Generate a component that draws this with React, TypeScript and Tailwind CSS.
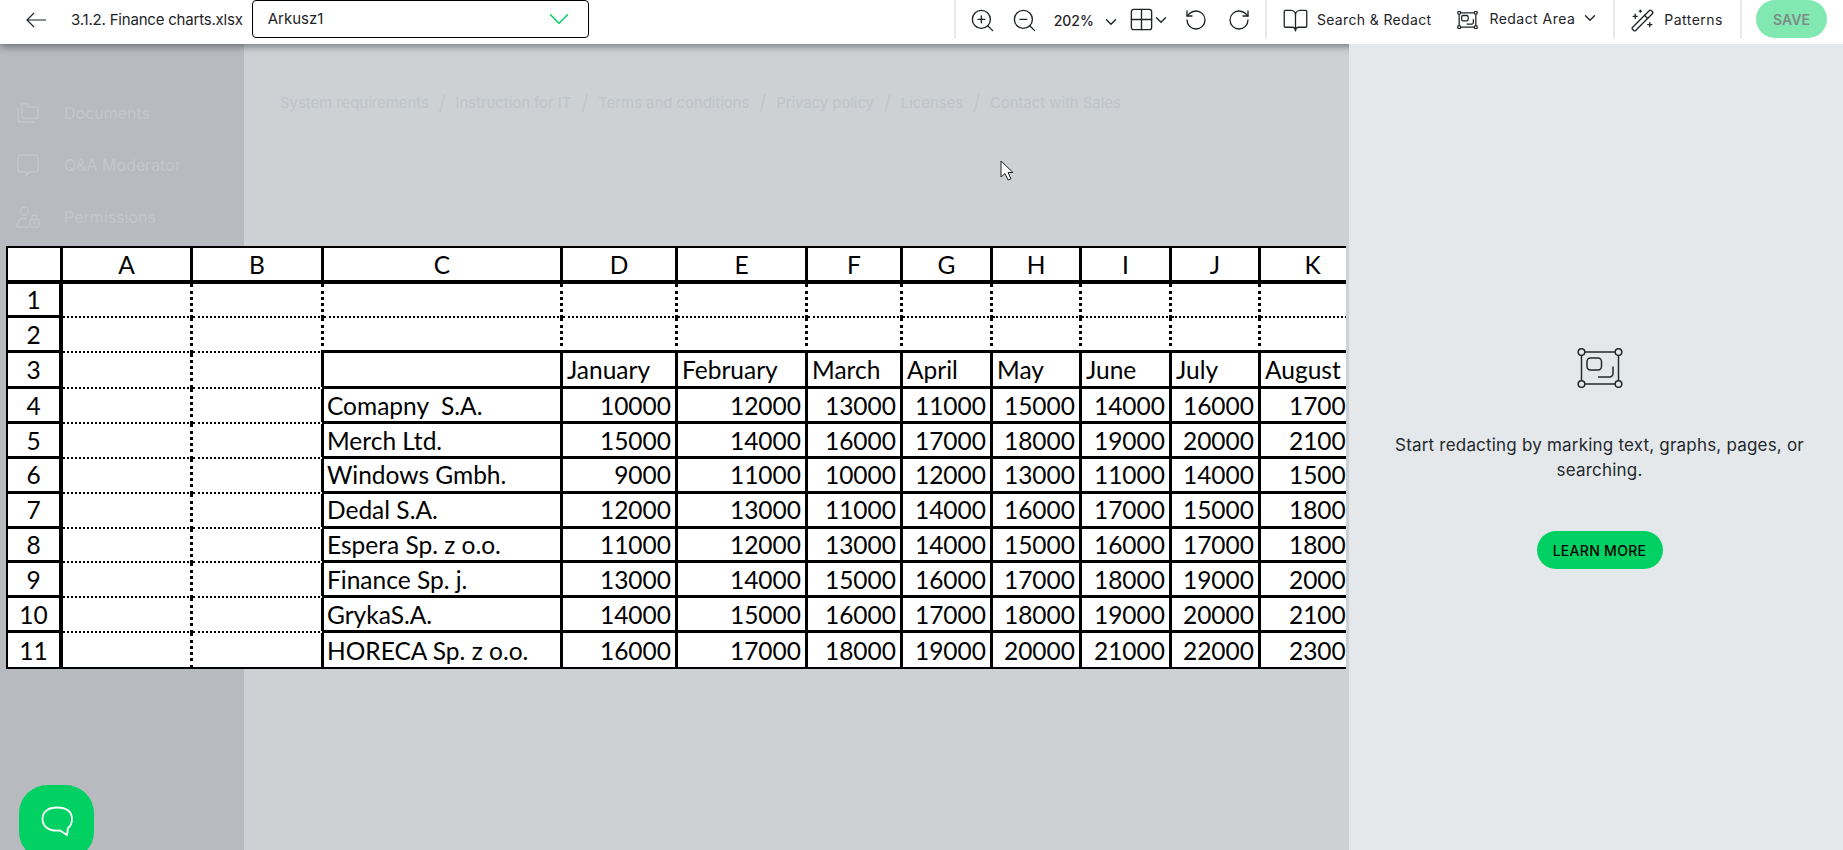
import React from 'react';
import { ZoomIn, ZoomOut, ChevronDown, Grid2x2, RotateCcw, RotateCw, BookOpen, WandSparkles } from 'lucide-react';

const columnHeaders = ['A', 'B', 'C', 'D', 'E', 'F', 'G', 'H', 'I', 'J', 'K'];
const months = ['January', 'February', 'March', 'April', 'May', 'June', 'July', 'August'];

const companies: [string, number[]][] = [
  ['Comapny  S.A.', [10000, 12000, 13000, 11000, 15000, 14000, 16000, 17000]],
  ['Merch Ltd.', [15000, 14000, 16000, 17000, 18000, 19000, 20000, 21000]],
  ['Windows Gmbh.', [9000, 11000, 10000, 12000, 13000, 11000, 14000, 15000]],
  ['Dedal S.A.', [12000, 13000, 11000, 14000, 16000, 17000, 15000, 18000]],
  ['Espera Sp. z o.o.', [11000, 12000, 13000, 14000, 15000, 16000, 17000, 18000]],
  ['Finance Sp. j.', [13000, 14000, 15000, 16000, 17000, 18000, 19000, 20000]],
  ['GrykaS.A.', [14000, 15000, 16000, 17000, 18000, 19000, 20000, 21000]],
  ['HORECA Sp. z o.o.', [16000, 17000, 18000, 19000, 20000, 21000, 22000, 23000]],
];

const breadcrumbs = ['System requirements', 'Instruction for IT', 'Terms and conditions', 'Privacy policy', 'Licenses', 'Contact with Sales'];

const RedactIcon = ({ className, stroke = 1.5 }: { className?: string; stroke?: number }) => (
  <svg className={className} viewBox="0 0 46 40" fill="none" stroke="currentColor" strokeWidth={stroke}>
    <path d="M7.500 4h31M7.500 36h31M4.500 7v26M41.500 7v26" />
    <circle cx="4.500" cy="4" r="3.300" />
    <circle cx="41.500" cy="4" r="3.300" />
    <circle cx="4.500" cy="36" r="3.300" />
    <circle cx="41.500" cy="36" r="3.300" />
    <rect x="10" y="10" width="14.500" height="12" rx="3.500" />
    <path d="M36 18.500v7a3.500 3.500 0 0 1-3.500 3.500H21" />
  </svg>
);

const FoldersIcon = () => (
  <svg className="w-6 h-6" viewBox="0 0 24 24" fill="none" stroke="currentColor" strokeWidth="1.4" strokeLinejoin="round" strokeLinecap="round">
    <path d="M6 3h5l2 3h9v10a1.500 1.500 0 0 1-1.500 1.500h-13A1.500 1.500 0 0 1 6 16z" />
    <path d="M2 7v12.500A1.500 1.500 0 0 0 3.500 21H18" />
  </svg>
);

const BubbleIcon = () => (
  <svg className="w-6 h-6" viewBox="0 0 24 24" fill="none" stroke="currentColor" strokeWidth="1.4" strokeLinejoin="round">
    <path d="M4.500 2h15A2.500 2.500 0 0 1 22 4.500v12a2.500 2.500 0 0 1-2.500 2.500H13l-3 3.500V19H4.500A2.500 2.500 0 0 1 2 16.500v-12A2.500 2.500 0 0 1 4.500 2z" />
  </svg>
);

const UserLockIcon = () => (
  <svg className="w-6 h-6" viewBox="0 0 24 24" fill="none" stroke="currentColor" strokeWidth="1.4" strokeLinejoin="round" strokeLinecap="round">
    <circle cx="8.500" cy="6" r="4" />
    <path d="M1 22v-2a7 7 0 0 1 9-6.500M1 22h11" />
    <rect x="14" y="14.500" width="9" height="7.500" rx="1.500" />
    <path d="M16 14.500v-2a2.500 2.500 0 0 1 5 0" />
    <circle cx="18.500" cy="18.200" r="0.800" fill="currentColor" />
  </svg>
);

const Divider = () => <div className="w-[2px] h-[39px] bg-[#e6e8ea] shrink-0" />;

const Header = () => (
  <header className="relative z-10 h-11 shrink-0 bg-white flex items-start shadow-[0_2px_8px_rgba(0,0,0,0.45)] text-[#1d2327]">
    <svg className="w-5 h-5 ml-[26px] mt-[10px] shrink-0" viewBox="0 0 20 20" fill="none" stroke="currentColor" strokeWidth="1.2">
      <path d="M20 10H1M8 3l-7 7 7 7" />
    </svg>
    <span className="ml-[25px] mt-[10px] text-[15px] leading-5 tracking-[-0.2px] whitespace-nowrap">3.1.2. Finance charts.xlsx</span>
    <div className="ml-[9px] w-[337px] h-[38px] border border-black rounded-[4px] flex items-center justify-between pl-[15px] pr-[12px] text-[15px]">
      <span>Arkusz1</span>
      <ChevronDown className="w-[34px] h-[34px] text-[#00d162]" strokeWidth={1.1} />
    </div>

    <div className="ml-auto flex items-start pr-4">
      <Divider />
      <ZoomIn className="w-[27px] h-[27px] ml-[13px] mt-[7px]" strokeWidth={1.2} />
      <ZoomOut className="w-[27px] h-[27px] ml-[15px] mt-[7px]" strokeWidth={1.2} />
      <span className="ml-[16px] mt-[11px] text-[14px] leading-5 font-medium">202%</span>
      <ChevronDown className="w-[18px] h-[18px] ml-[8px] mt-[13px]" strokeWidth={1.8} />
      <Grid2x2 className="w-[27px] h-[27px] ml-[8px] mt-[6px]" strokeWidth={1.2} />
      <ChevronDown className="w-[18px] h-[18px] -ml-[3px] mt-[11px]" strokeWidth={1.8} />
      <RotateCcw className="w-6 h-6 ml-[14px] mt-2" strokeWidth={1.3} />
      <RotateCw className="w-6 h-6 ml-[19px] mt-2" strokeWidth={1.3} />
      <div className="ml-[14px]"><Divider /></div>
      <BookOpen className="w-[27px] h-[27px] ml-[15px] mt-[7px]" strokeWidth={1.15} />
      <span className="ml-[8px] mt-[10px] text-[14px] leading-5 tracking-[0.35px] whitespace-nowrap">Search &amp; Redact</span>
      <RedactIcon className="w-[21px] h-[18px] ml-[26px] mt-[11px]" stroke={2.8} />
      <span className="ml-[11px] mt-[9px] text-[14px] leading-5 tracking-[0.45px] whitespace-nowrap">Redact Area</span>
      <ChevronDown className="w-[18px] h-[18px] ml-[6px] mt-[9px]" strokeWidth={1.8} />
      <div className="ml-[14px]"><Divider /></div>
      <WandSparkles className="w-[25px] h-[25px] ml-[15px] mt-2" strokeWidth={1.25} />
      <span className="ml-[9px] mt-[10px] text-[14px] leading-5 tracking-[0.5px]">Patterns</span>
      <div className="ml-[17px]"><Divider /></div>
      <button className="ml-[14px] w-[71px] h-[38px] rounded-[19px] bg-[#80e8b0] text-[#808a88] text-[14px] font-semibold">SAVE</button>
    </div>
  </header>
);

const Sidebar = () => (
  <aside className="w-[244px] shrink-0 bg-[#b7babe] text-[#c4c7ca] flex flex-col gap-[28px] pl-4 pt-[57px] text-[16px]">
    <div className="flex items-center gap-6 h-6"><FoldersIcon /><span>Documents</span></div>
    <div className="flex items-center gap-6 h-6"><BubbleIcon /><span>Q&amp;A Moderator</span></div>
    <div className="flex items-center gap-6 h-6"><UserLockIcon /><span>Permissions</span></div>
  </aside>
);

const Breadcrumbs = () => (
  <nav className="flex items-center gap-[10px] pl-9 pt-[49px] text-[15px] leading-5 tracking-[-0.08px] text-[#c0c4c8] whitespace-nowrap">
    {breadcrumbs.map((item, idx) => (
      <React.Fragment key={item}>
        {idx > 0 && <span className="text-[20px] font-light">/</span>}
        <span>{item}</span>
      </React.Fragment>
    ))}
  </nav>
);

const Sheet = () => {
  const headerCell = 'flex items-center justify-center pt-[3px] border-black border-r-[3px] border-b-[4px]';
  const rowHead = 'flex items-center justify-center pt-[2px] border-black border-r-[4px] border-b-[3px]';
  const lastRowHead = 'flex items-center justify-center pt-[2px] border-black border-r-[4px]';
  const dotted = 'border-black border-r-[3px] border-b-[2px] border-dotted';
  const dottedEdge = 'border-black border-r-[3px] border-b-[2px] border-dotted [border-right-style:solid]';
  const dottedOverSolid = 'border-black border-r-[3px] border-b-[3px] border-dotted [border-bottom-style:solid]';
  const solid = 'pt-[2px] border-black border-r-[3px] border-b-[3px]';
  const lastSolid = 'pt-[2px] border-black border-r-[3px]';

  return (
    <div className="absolute left-[6px] top-[202px] w-[1340px] h-[423px] overflow-hidden bg-white border-l-2 border-t-2 border-b-2 border-black font-['Lato',sans-serif] text-[24.5px] text-black">
      <div className="grid grid-cols-[55px_130px_131px_239px_115px_130px_95px_90px_89px_90px_89px_106px] grid-rows-[36px_34px_35px_36px_repeat(8,34.9px)] w-max leading-none">
        <div className={headerCell} />
        {columnHeaders.map((c) => <div key={c} className={headerCell}>{c}</div>)}

        <div className={rowHead}>1</div>
        {columnHeaders.map((c) => <div key={c} className={dotted} />)}

        <div className={rowHead}>2</div>
        <div className={dotted} />
        <div className={dotted} />
        {columnHeaders.slice(2).map((c) => <div key={c} className={dottedOverSolid} />)}

        <div className={rowHead}>3</div>
        <div className={dotted} />
        <div className={dottedEdge} />
        <div className={solid} />
        {months.map((m) => (
          <div key={m} className={`${solid} flex items-center pl-[4px] whitespace-nowrap`}>{m}</div>
        ))}

        {companies.map(([name, values], rowIdx) => {
          const isLast = rowIdx === companies.length - 1;
          const cell = isLast ? lastSolid : solid;
          return (
            <React.Fragment key={name}>
              <div className={isLast ? lastRowHead : rowHead}>{rowIdx + 4}</div>
              <div className={isLast ? 'border-black border-r-[3px] border-dotted' : dotted} />
              <div className={isLast ? 'border-black border-r-[3px]' : dottedEdge} />
              <div className={`${cell} flex items-center pl-[3px] whitespace-pre`}>{name}</div>
              {values.map((v, idx) => (
                <div key={idx} className={`${cell} flex items-center justify-end pr-[4px]`}>{v}</div>
              ))}
            </React.Fragment>
          );
        })}
      </div>
    </div>
  );
};

const RedactionPanel = () => (
  <aside className="relative z-20 w-[494px] shrink-0 bg-[#e5e8eb] flex flex-col items-center pl-[7px] pt-[304px] text-[#23282c]">
    <RedactIcon className="w-[46px] h-[40px]" />
    <p className="mt-[45px] w-[420px] text-center text-[17px] leading-[25px] tracking-[0.2px]">Start redacting by marking text, graphs, pages, or searching.</p>
    <button className="mt-[48px] w-[126px] h-[38px] rounded-[19px] bg-[#00d162] text-black text-[14px] font-medium tracking-[0.3px]">LEARN MORE</button>
  </aside>
);

export default function App() {
  return (
    <div className="relative h-[850px] w-[1843px] overflow-hidden flex flex-col font-['Inter',sans-serif]">
      <Header />
      <div className="relative flex flex-1">
        <Sidebar />
        <main className="flex-1 bg-[#cdd1d4]">
          <Breadcrumbs />
        </main>
        <RedactionPanel />
        <Sheet />
        <svg className="absolute left-[1000px] top-[116px] w-[14px] h-[21px]" viewBox="0 0 14 21">
          <path d="M1 1v16l4-3.500 3 6.500 3-1.200-3-6.300h5z" fill="#fff" stroke="#222" strokeWidth="1" />
        </svg>
      </div>
      <button className="absolute left-[19px] top-[785px] w-[75px] h-[75px] rounded-[38%] bg-[#00d162] flex items-center justify-center pb-[2px]">
        <svg className="w-8 h-[31px]" viewBox="0 0 32 31" fill="none" stroke="#fff" strokeWidth="1.800" strokeLinejoin="round">
          <path d="M16 1.500c9 0 15 3.500 15 11.500 0 4-1.500 7-4 9l-1 7-7-4.500c-1 .2-2 .2-3 .2C7 24.700 1.500 20 1.500 13S7 1.500 16 1.500z" />
        </svg>
      </button>
    </div>
  );
}
